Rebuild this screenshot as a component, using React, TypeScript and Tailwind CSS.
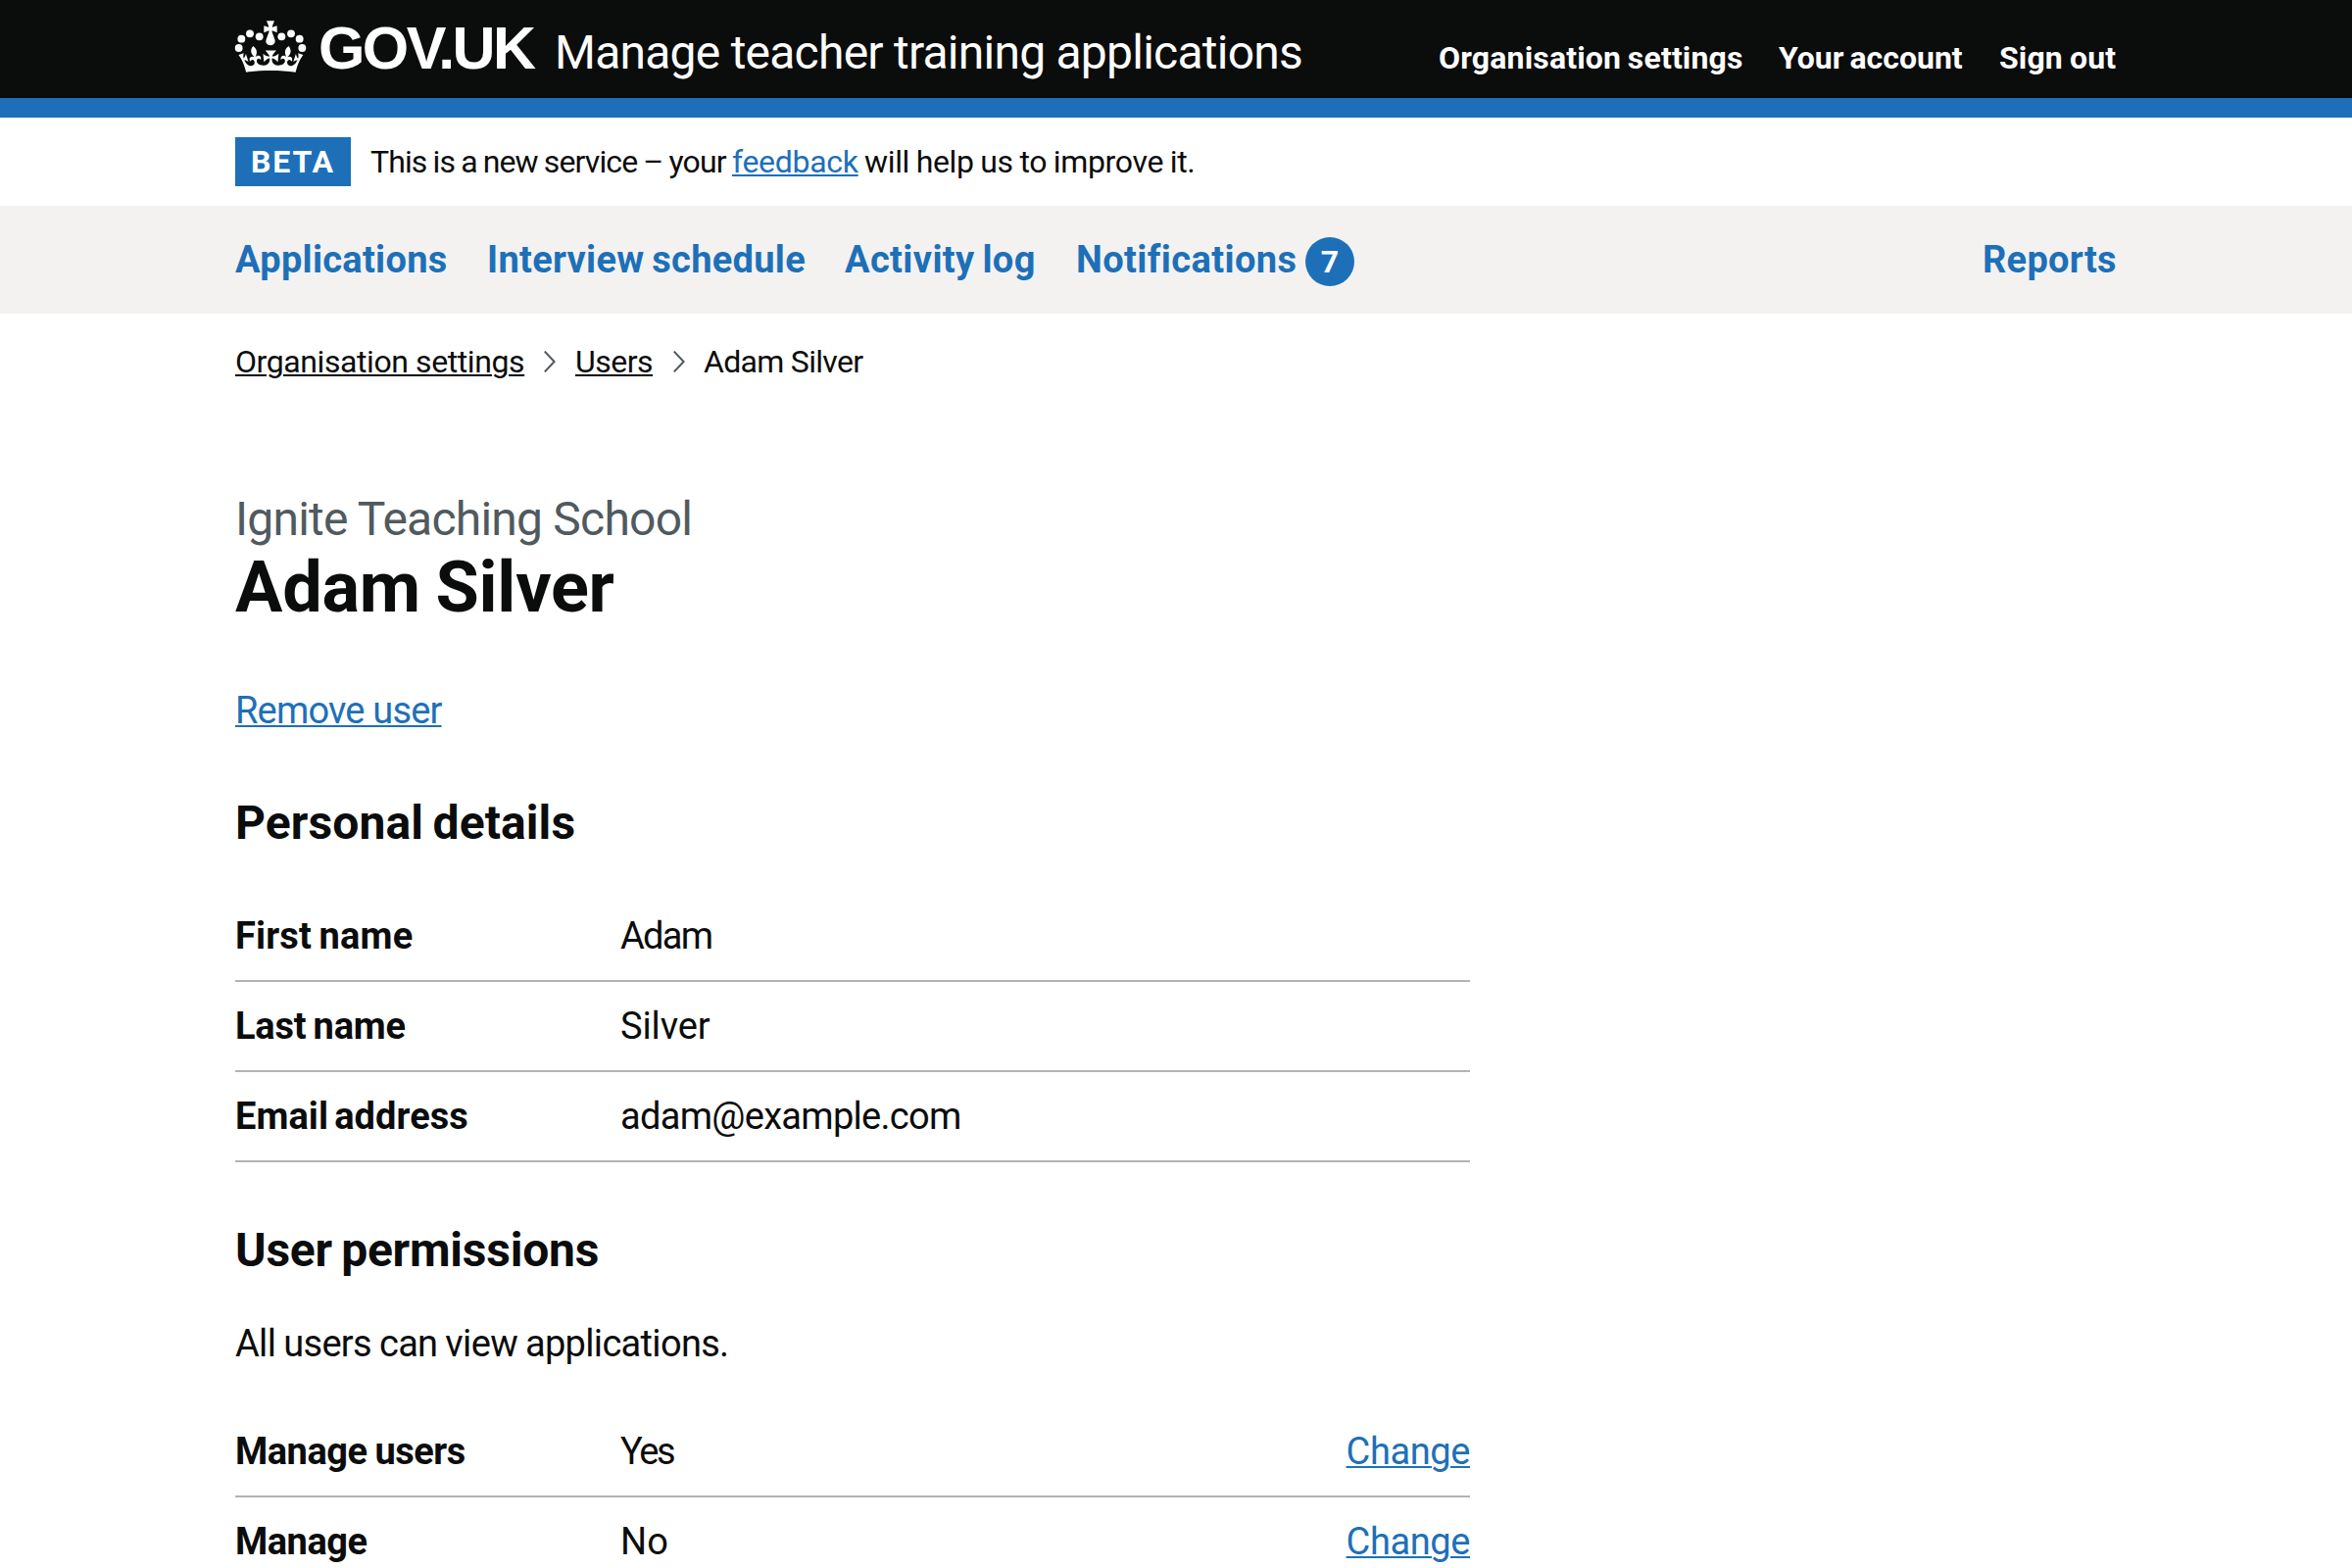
import React from "react";

const link = "text-[#1d70b8] underline decoration-2 underline-offset-[2px]";

function Crown() {
  return (
    <svg viewBox="0 0 240 192" className="ml-[-4px] mt-4 h-16 w-20 shrink-0" fill="#fff" aria-hidden="true">
      <circle cx="23" cy="99" r="11.8" />
      <circle cx="31" cy="71" r="11.8" />
      <circle cx="57" cy="55" r="11.8" />
      <circle cx="86" cy="64" r="11.8" />
      <circle cx="154" cy="64" r="11.8" />
      <circle cx="183" cy="55" r="11.8" />
      <circle cx="209" cy="71" r="11.8" />
      <circle cx="217" cy="99" r="11.8" />
      <path d="M108 16h24l-7 18 1 1 14-4v21l-14-6-2 2 8 22c6 12-2 21-12 21s-18-9-12-21l8-22-2-2-14 6V31l14 4 1-1z" />
      <path
        transform="translate(19.8 -7) scale(6.26 6)"
        d="M16 29.2c4.4 0 8.6.3 12.3.8 1.1-4.5 2.4-7 3.7-8.8l-2.5-.9c.2 1.3.3 1.9 0 2.7-.4-.4-.8-1.1-1.1-2.3l-1.2 4c.7-.5 1.3-.8 2-.9-1.1 2.5-2.6 3.1-3.5 3-1.1-.2-1.7-1.2-1.5-2.1.3-1.2 1.5-1.5 2.1-.1 1.1-2.3-.8-3-2-2.3 1.9-1.9 2.1-3.5.6-5.6-2.1 1.6-2.1 3.2-1.2 5.5-1.2-1.4-3.2-.6-2.5 1.6.9-1.4 2.1-.5 1.9.8-.2 1.1-1.7 2.1-3.5 1.9-2.7-.2-2.9-2.1-2.9-3.6.7-.1 1.9.5 2.9 1.9l.4-4.3c-1.1 1.1-2.1 1.4-3.2 1.4.4-1.2 2.1-3 2.1-3h-5.4s1.7 1.9 2.1 3c-1.1 0-2.1-.2-3.2-1.4l.4 4.3c1-1.4 2.2-2 2.9-1.9-.1 1.5-.2 3.4-2.9 3.6-1.9.2-3.4-.8-3.5-1.9-.2-1.3 1-2.2 1.9-.8.7-2.3-1.2-3-2.5-1.6.9-2.2.9-3.9-1.2-5.5-1.5 2-1.3 3.7.6 5.6-1.2-.7-3.1 0-2 2.3.6-1.4 1.8-1.1 2.1.1.2.9-.3 1.9-1.5 2.1-.9.2-2.4-.5-3.5-3 .6 0 1.2.3 2 .9l-1.2-4c-.3 1.1-.7 1.9-1.1 2.3-.3-.8-.2-1.4 0-2.7l-2.5.9c1.3 1.8 2.6 4.3 3.7 8.8 3.7-.5 7.9-.8 12.3-.8z"
      />
    </svg>
  );
}

function Chevron() {
  return (
    <svg viewBox="0 0 12 22" className="h-[22px] w-3 shrink-0" fill="none" stroke="#505a5f" strokeWidth="2" aria-hidden="true">
      <path d="M0.8 0.6 10.6 11 0.8 21.4" />
    </svg>
  );
}

interface RowProps {
  term: string;
  termClass: string;
  value: string;
  valueClass: string;
  action?: boolean;
}

function Row({ term, termClass, value, valueClass, action }: RowProps) {
  return (
    <div className="flex border-b-2 border-[#b1b4b6] py-5 text-[38px] leading-[50px]">
      <dt className={`w-[393px] shrink-0 font-bold ${termClass}`}>{term}</dt>
      <dd className={`flex-1 ${valueClass}`}>{value}</dd>
      {action && (
        <dd>
          <a className={`${link} tracking-[-0.4px]`}>Change</a>
        </dd>
      )}
    </div>
  );
}

export default function App() {
  return (
    <div className="h-[1600px] w-[2400px] overflow-hidden bg-white font-[Roboto,sans-serif] text-[#0b0c0c]">
      <header className="h-[120px] border-b-[20px] border-[#1d70b8] bg-[#0b0c0c] text-white">
        <div className="mx-auto flex w-[1920px] items-start whitespace-nowrap">
          <Crown />
          <span className="ml-[9px] mt-5 w-[241px] font-['Liberation_Sans',sans-serif] text-[61px] font-bold leading-[59px] tracking-[-2.6px]">
            GOV.UK
          </span>
          <span className="mt-7 text-[48px] leading-[51px] tracking-[-0.76px]">Manage teacher training applications</span>
          <nav className="ml-auto mt-[39px] flex text-[32px] font-bold leading-10">
            <a className="w-[347px] tracking-[0.17px] [word-spacing:-1.5px]">Organisation settings</a>
            <a className="w-[225px] [word-spacing:-2px]">Your account</a>
            <a className="w-[120px] tracking-[0.14px] [word-spacing:-1px]">Sign out</a>
          </nav>
        </div>
      </header>

      <div className="mx-auto flex h-[90px] w-[1920px] items-center whitespace-nowrap text-[32px] leading-[50px]">
        <strong className="mr-[20px] h-[50px] w-[118px] bg-[#1d70b8] pl-4 font-bold tracking-[1.9px] text-white">BETA</strong>
        <span className="w-[369px] tracking-[-0.88px] [word-spacing:-1px]">This is a new service – your</span>
        <a className={`${link} mr-[6px] w-[129px] tracking-[-0.3px]`}>feedback</a>
        <span className="tracking-[-0.33px] [word-spacing:-1px]">will help us to improve it.</span>
      </div>

      <div className="h-[110px] bg-[#f3f2f1]">
        <nav className="mx-auto flex w-[1920px] items-start whitespace-nowrap text-[38px] font-bold leading-10 text-[#1d70b8]">
          <a className="mt-[35px] w-[257px] tracking-[0.29px]">Applications</a>
          <a className="mt-[35px] w-[365px] tracking-[0.3px] [word-spacing:-2px]">Interview schedule</a>
          <a className="mt-[35px] w-[236px] tracking-[0.38px] [word-spacing:-2px]">Activity log</a>
          <a className="mt-[35px] w-[234px] tracking-[0.41px]">Notifications</a>
          <span className="mt-8 h-[50px] w-[50px] rounded-full bg-[#1d70b8] text-center text-[32px] leading-[50px] text-white">7</span>
          <a className="ml-auto mt-[35px] w-[137px] tracking-[0.27px]">Reports</a>
        </nav>
      </div>

      <main className="mx-auto w-[1920px]">
        <nav className="mt-[29px] flex items-center whitespace-nowrap text-[32px] leading-10">
          <a className="w-[315px] tracking-[-0.41px] underline decoration-2 underline-offset-[2px]">Organisation settings</a>
          <Chevron />
          <a className="ml-5 w-[100px] tracking-[-0.5px] underline decoration-2 underline-offset-[2px]">Users</a>
          <Chevron />
          <span className="ml-[19px] tracking-[-0.7px]">Adam Silver</span>
        </nav>

        <div className="mt-[115px] text-[48px] leading-[51px] tracking-[-0.78px] text-[#505a5f]">Ignite Teaching School</div>
        <h1 className="mt-[7px] text-[72px] font-bold leading-[75px] tracking-[-0.25px] [word-spacing:-2px]">Adam Silver</h1>
        <p className="mt-[63px] text-[38px] leading-[50px]">
          <a className={`${link} tracking-[-0.82px]`}>Remove user</a>
        </p>

        <section className="w-[1260px]">
          <h2 className="mt-16 text-[48px] font-bold leading-[51px] tracking-[0.1px] [word-spacing:-2.5px]">Personal details</h2>
          <dl className="mt-[45px]">
            <Row term="First name" termClass="tracking-[0.16px] [word-spacing:-2px]" value="Adam" valueClass="tracking-[-1.7px]" />
            <Row term="Last name" termClass="tracking-[-0.22px] [word-spacing:-2px]" value="Silver" valueClass="tracking-[-0.1px]" />
            <Row term="Email address" termClass="tracking-[0.08px] [word-spacing:-3.5px]" value="adam@example.com" valueClass="tracking-[-0.7px]" />
          </dl>

          <h2 className="mt-16 text-[48px] font-bold leading-[51px] tracking-[-0.22px] [word-spacing:-2.5px]">User permissions</h2>
          <p className="mt-[45px] text-[38px] leading-[50px] tracking-[-0.68px] [word-spacing:-0.8px]">All users can view applications.</p>
          <dl className="mt-10">
            <Row term="Manage users" termClass="tracking-[-0.5px] [word-spacing:-1px]" value="Yes" valueClass="tracking-[-2.4px]" action />
            <Row term="Manage" termClass="tracking-[-0.5px]" value="No" valueClass="tracking-[0.19px]" action />
          </dl>
        </section>
      </main>
    </div>
  );
}
